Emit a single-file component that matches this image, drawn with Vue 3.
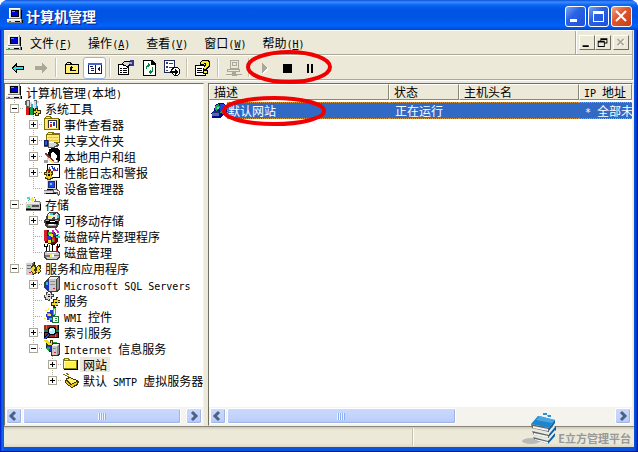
<template>
  <div class="window">
    <header class="titlebar">
      <Icon name="computer" />
      <h1>计算机管理</h1>
      <button class="caption" aria-label="最小化"><svg viewBox="0 0 21 21"><path d="M5 13h7v3H5z" fill="#fff" /></svg></button>
      <button class="caption" aria-label="最大化"><svg viewBox="0 0 21 21"><path d="M5 5h11v11H5zM6 8v7h9V8z" fill="#fff" fill-rule="evenodd" /></svg></button>
      <button class="caption close" aria-label="关闭"><svg viewBox="0 0 21 21"><path d="M5 5l10 10M15 5L5 15" stroke="#fff" stroke-width="2" /></svg></button>
    </header>

    <div class="client">
      <div class="bars">
        <div class="menubar">
          <Icon name="computer" />
          <nav>
            <button v-for="m in menus" :key="m.key">{{ m.text }}<span class="ascii">(<u>{{ m.key }}</u>)</span></button>
          </nav>
          <div class="mdi">
            <button aria-label="最小化"><svg viewBox="0 0 16 14"><path d="M3 10h7v2H3z" /></svg></button>
            <button aria-label="还原"><svg viewBox="0 0 16 14"><path d="M5 2h8v6h-3v4H2V5h3zM6 4v1h4v2h2V4zM3 7v4h6V7z" fill-rule="evenodd" /></svg></button>
            <button class="mdi-close" aria-label="关闭" disabled><svg viewBox="0 0 16 14"><path d="M5 4l7 7M12 4l-7 7" stroke="#fff" stroke-width="2" /><path d="M4 3l7 7M11 3l-7 7" stroke="#aca899" stroke-width="2" /></svg></button>
          </div>
        </div>
        <div class="toolbar">
          <template v-for="(t, i) in tools" :key="i">
            <i v-if="t.sep" class="sep"></i>
            <button v-else :class="{ pressed: t.pressed }" :disabled="t.disabled" :aria-label="t.title"><Icon :name="t.icon" /></button>
          </template>
          <svg class="mark mark-tools" viewBox="0 0 86 34"><ellipse cx="43" cy="17" rx="41" ry="15" /></svg>
        </div>
      </div>

      <main class="panes">
        <section class="pane tree-pane">
          <ul class="tree" role="tree">
            <li v-for="row in rows" :key="row.label" role="treeitem">
              <i v-for="(g, i) in row.guides" :key="i" class="cell" :class="{ line: g }"></i>
              <span v-if="row.depth" class="cell branch" :class="{ last: row.last }">
                <button v-if="row.state" class="expander" :class="row.state" :aria-label="row.label" @click="toggle(row)"></button>
              </span>
              <Icon :name="row.icon" />
              <Label :text="row.label" class="label" :class="{ selected: row.label === '网站' }" />
            </li>
          </ul>
          <div class="scrollbar">
            <button aria-label="向左"><svg viewBox="0 0 16 16"><path d="M9 4L5 8l4 4" /></svg></button>
            <div class="track"><div class="thumb" style="width: 97%"><i></i></div></div>
            <button aria-label="向右"><svg viewBox="0 0 16 16"><path d="M6 4l4 4-4 4" /></svg></button>
          </div>
        </section>

        <section class="pane list-pane">
          <table>
            <colgroup><col class="c1"><col class="c2"><col class="c3"><col></colgroup>
            <thead>
              <tr><th v-for="c in columns" :key="c"><Label :text="c" /></th></tr>
            </thead>
            <tbody>
              <tr>
                <td class="first">
                  <div class="name">
                    <Icon name="site" />
                    <span>默认网站</span>
                    <svg class="mark mark-site" viewBox="0 0 104 31"><ellipse cx="52" cy="15" rx="50" ry="13" /></svg>
                  </div>
                </td>
                <td>正在运行</td>
                <td></td>
                <td><Label text="* 全部未" /></td>
              </tr>
            </tbody>
          </table>
          <div class="scrollbar">
            <button aria-label="向左"><svg viewBox="0 0 16 16"><path d="M9 4L5 8l4 4" /></svg></button>
            <div class="track"><div class="thumb" style="width: 59%"><i></i></div></div>
            <button aria-label="向右"><svg viewBox="0 0 16 16"><path d="M6 4l4 4-4 4" /></svg></button>
          </div>
        </section>
      </main>

      <footer class="statusbar">
        <span class="status-main"></span>
        <span class="status-side"></span>
      </footer>
    </div>

    <div class="brand">
      <svg viewBox="0 0 36 34">
        <ellipse cx="9" cy="29" rx="9" ry="3" fill="#b9b9b6" />
        <path d="M9 12l7-8 17 4-6 8z" fill="#1d86cf" />
        <path d="M14 8l4-4 15 4-3 3z" fill="#49a6e2" />
        <path d="M9 12l18 4v4l-17-4zM10 19l17 4v3l-15-3zM11 25l15 4v3l-13-4z" fill="#5e6468" />
        <path d="M11 14l15 3v2l-15-3zM12 21l14 3v2l-14-3zM13 27l13 3v2l-13-4z" fill="#f2f5f7" />
        <path d="M27 16l6-8v3l-6 8zM27 22l7-8v4l-7 7zM26 29l7-8v3l-7 8z" fill="#0d5f9f" />
        <path d="M27 19l6-7v2l-6 8zM27 25l6-7v2l-6 8z" fill="#dcebf5" />
        <path d="M21 1h4v2h-4zM25 3h4v2h-3z" fill="#2c8fd0" />
      </svg>
      <span>E立方管理平台</span>
    </div>
  </div>
</template>

<script setup>
import { computed, h, ref } from 'vue';

// every icon is a stack of [fill, path] layers on a 16x16 grid
const icons = {
  computer: [
    ['#000', 'M3 10h11V2h1v9h-1v1H3zM1 15h15v-3h-1v3z'],
    ['#808080', 'M2 0h12v11H2zM0 11h15v4H0z'],
    ['#e4e4e4', 'M2 0h11v10H2zM0 11h14v3H0z'],
    ['#fff', 'M2 0h11v1H3v9H2zM0 11h14v1H0z'],
    ['#000', 'M4 2h8v7H4zM8 13h5v1H8z'],
    ['#0000d8', 'M5 3h6v5H5z'],
    ['#5a8cff', 'M5 3h3v1H5z'],
    ['#00a000', 'M2 13h2v1H2z'],
  ],
  tools: [
    ['#606060', 'M1 0h4v2h2v2H5v4H1V5H0V1zM9 0h3v6h1v4H9z'],
    ['#d8d8d8', 'M2 1h2v5H2zM5 2h2v4H5zM9 1h2v8H9zM12 1h2v2h-2z'],
    ['#30a8d8', 'M6 4h2v3H6zM11 4h1v4h-1z'],
    ['#000', 'M4 8h1v7H1v-1h3zM8 8h1v7H5v-1h3z'],
    ['#e01818', 'M1 7h3v8H1z'],
    ['#08a048', 'M5 7h3v8H5z'],
    ['#302800', 'M9 10h1V8h3v2h3v4h-2v2h-4v-2H8v-2z'],
    ['#f0d020', 'M9 11h2V9h1v2h3v2h-2v2h-2v-2H9z'],
    ['#000', 'M11 12h1v1h-1z'],
  ],
  events: [
    ['#000', 'M1 14h15V3h-1v10H1z'],
    ['#807000', 'M0 2l2-2h5l1 2h7v12H0z'],
    ['#ffe878', 'M1 3h13v10H1zM2 1h4v1H2z'],
    ['#303030', 'M3 4h10v8H3z'],
    ['#fff', 'M5 5h7v7H5z'],
    ['#ffe030', 'M3 4h1v8H3z'],
    ['#e02020', 'M6 8h2v3H6z'],
    ['#2030d0', 'M9 6h2v4H9zM6 6h2v1H6z'],
  ],
  shared: [
    ['#807000', 'M3 1l2-1h4l1 1h6v10H2V3z'],
    ['#ffe878', 'M3 3h12v7H3zM4 1h4v1H4z'],
    ['#e5c838', 'M4 5h10v1H4zM4 8h10v1H4z'],
    ['#505050', 'M0 8h5v2h5l5 2v2l-5 2H4v-1H0z'],
    ['#101870', 'M0 8h4v6H0z'],
    ['#2858d8', 'M1 9h2v4H1z'],
    ['#d8d8d8', 'M5 10h4l4 2v1l-4 2H5z'],
    ['#fff', 'M5 10h3l3 1H5z'],
  ],
  users: [
    ['#000', 'M5 1l3-1h5l3 3v9l-2 2-2-1 1-5-2-3H7v3l2 3-3 1-2-4z'],
    ['#fff', 'M8 4l3 1 1 4-2 3-3-1V7z'],
    ['#a0a0a0', 'M8 12h6l1 3H8zM0 12h4v3H0z'],
    ['#fff', 'M10 12h3v2h-3z'],
    ['#f4cd9a', 'M3 7h2v3l2 2H3z'],
    ['#902028', 'M0 6l2-1 8 8-2 1z'],
    ['#e83848', 'M1 6l7 7H7L0 6z'],
    ['#fff060', 'M4 11l2-1 4 5H7z'],
  ],
  perf: [
    ['#000', 'M3 0h13v14H3z'],
    ['#fff', 'M4 1h11v12H4z'],
    ['#d02020', 'M4 5h1V3h1v2h1v2h2V5h1V3h1v2h1v2H9v2H7V7H6V6H5v2H4z'],
    ['#2030d0', 'M7 2h2v2h2v2h2V4h1v3h-3V5H8V3H7z'],
    ['#403000', 'M0 8h2V6h2v2h1V6h2v2h2v3H8v2h1v2H7v1H3v-1H1v-2h1v-2H0z'],
    ['#e8c820', 'M1 9h2V7h1v2h2V7h1v2h1v1H7v2h1v2H6v1H4v-1H2v-2h1v-2H1z'],
    ['#000', 'M4 10h2v2H4z'],
  ],
  device: [
    ['#808080', 'M3 0h10v10H3zM0 10h14v4H0z'],
    ['#d8d8d8', 'M3 0h9v9H3zM0 11h12v2H0z'],
    ['#000', 'M12 1h1v9H3V9h9zM2 13h10v1H2z'],
    ['#202880', 'M4 1h7v7H4z'],
    ['#2048f0', 'M5 2h5v5H5z'],
    ['#60d8ff', 'M6 3h2v2H6z'],
    ['#606060', 'M9 9h5l2 3v3l-2 1-1-3H9z'],
    ['#f0f0f0', 'M10 10h3v1h2v3h-1v-2h-4z'],
  ],
  storage: [
    ['#707070', 'M1 6h4V1h5l1 4h4l1 2v8H1z'],
    ['#c0c0c0', 'M1 6h13l1 1v7H1z'],
    ['#ececec', 'M2 6h12v2H2zM0 7h2v2H0z'],
    ['#f8f8f8', 'M2 1l3-1h3l2 3v2L7 6H3L1 4z'],
    ['#40d8d8', 'M2 1h3v2H2z'],
    ['#ffe838', 'M5 3l3-2 1 3-2 2z'],
    ['#50c050', 'M5 3L4 6 2 4z'],
    ['#505050', 'M7 9h7v2H7zM1 12h5v1H1z'],
    ['#000', 'M1 14h15V8h-1v5H1z'],
    ['#20c030', 'M3 10h2v1H3z'],
  ],
  removable: [
    ['#404040', 'M3 2l3-2h7l3 3v4l-2 8-2 1H3l-2-2-1-6 2-2z'],
    ['#e8e8e8', 'M4 2l2-1h3l1 3-2 3H4zM10 3l2-2 3 2-1 3-3 1z'],
    ['#40d0d8', 'M6 1h3v2H6zM13 3h2v3h-2z'],
    ['#f8e838', 'M4 4h3v2H4z'],
    ['#000', 'M2 8h12v4H2z'],
    ['#b0b0b0', 'M2 8h3v1H2zM11 8h3v1h-3zM4 12h8v2H4z'],
    ['#fff', 'M6 9h5v1H6zM5 12h5v1H5z'],
  ],
  defrag: [
    ['#600810', 'M1 2h4v2h6v3h3v6l-3 3H4v-1H1z'],
    ['#d82028', 'M0 2h3v11H0zM8 9h3v5H8z'],
    ['#20b838', 'M4 4h4v3H4zM8 11h2v3H8z'],
    ['#f8e020', 'M5 6h4v3H5zM4 12h3v3H4z'],
    ['#2838d8', 'M3 8h4v4H3zM9 5h3v3H9z'],
    ['#d020c8', 'M11 0h1v1h1v1h1v1h1v2h-2V3h-1V2h-1zM8 2h2v3H8z'],
    ['#20d0b0', 'M12 8h4v2h-4zM13 6h2v1h-2z'],
  ],
  diskmgmt: [
    ['#000', 'M0 0h1v2h2V0h1v3H3v4H2V3H0zM7 0h4v1H9v6H8V1H7zM13 0h1v2h1V0h1v3l-2 1v3h-1z'],
    ['#404040', 'M1 7h13l2 2v5l-3 2H3l-3-2V9z'],
    ['#c8c8c8', 'M1 8h12l2 1v4l-3 2H4l-3-2z'],
    ['#3038b0', 'M5 1h1v6H5z'],
    ['#c02828', 'M12 2h1v5h-1z'],
    ['#707070', 'M1 11h5v2H1zM10 11h5v1h-5z'],
    ['#ffe850', 'M6 10h2v3H6z'],
    ['#fff', 'M3 8h9v1H3zM8 10h2v3H8z'],
  ],
  services: [
    ['#000', 'M2 15h6l2-2V2H9v11H2z'],
    ['#d0d0d0', 'M1 3h6v12H1z'],
    ['#f4f4f4', 'M3 1h5L7 3H1z'],
    ['#707070', 'M7 3l2-2v13l-2 1zM2 5h4v1H2zM2 8h4v1H2z'],
    ['#e02020', 'M4 12h2v1H4z'],
    ['#403800', 'M6 6l3-2 2 2v2l2-3h3v3l-1 1 1 2-2 3-3-1-1 1-3-1-1-3z'],
    ['#f0d828', 'M7 7l2-1 1 2-1 2 1 2-1 1-2-1-1-2zM12 7l2-1 1 2-1 1 1 2-1 1-2 1-1-1 1-2z'],
  ],
  server: [
    ['#404040', 'M4 2l2-2h9l1 1v12l-3 3H5l-3-2-2-3V6l3-2z'],
    ['#1830d0', 'M2 5h3v9H3l-2-3V6z'],
    ['#38b8e8', 'M2 6h2v3H2z'],
    ['#c8c8c8', 'M5 3h7v12H5z'],
    ['#f0f0f0', 'M6 1h8l-2 2H5z'],
    ['#909090', 'M13 3l2-2v11l-2 2zM6 5h5v1H6zM6 8h5v1H6z'],
    ['#e02020', 'M9 12h2v1H9z'],
  ],
  gears: [
    ['#404040', 'M0 3h2V0h2v2h2V0h2v2h2v3H8v2H6v2H4V8H1V6H0z'],
    ['#d8d8d8', 'M1 3h2V1h1v2h2V1h1v2h2v1H7v3H5v1H4V7H2V5H1z'],
    ['#000', 'M4 4h2v1H4z'],
    ['#302800', 'M7 10h2V7h3V5h2v3h2v3h-2v3h-2v2h-3v-2H7z'],
    ['#f0d828', 'M8 11h2V8h3V6h1v3h2v1h-2v3h-2v2h-1v-2H8z'],
    ['#000', 'M11 10h2v1h-2z'],
  ],
  wmi: [
    ['#2038d0', 'M3 4h3V2h3v3h2v6H8v3H6v-2H3V9H2V6h1z'],
    ['#30b8d8', 'M3 5h3v3H3zM5 10h3v2H5z'],
    ['#f8e830', 'M1 2h2v1H1zM4 6h3v2H4zM0 10h2v1H0zM3 13h2v1H3zM4 0h1v2H4z'],
    ['#28c840', 'M9 0h3v7H9z'],
    ['#e8f8f0', 'M10 1h1v5h-1z'],
    ['#206838', 'M8 8h7v7H8z'],
    ['#fff', 'M9 9h5v5H9z'],
    ['#28a840', 'M11 10h2v1h-2zM11 12h2v1h-2z'],
  ],
  index: [
    ['#000', 'M0 1h15v13H0z'],
    ['#a02820', 'M0 1h14v5H0zM1 9h13v4H1z'],
    ['#d86040', 'M2 1h1v4H2zM12 1h1v4h-1zM11 9h1v4h-1z'],
    ['#207868', 'M0 6h4v2H0zM12 6h3v2h-3z'],
    ['#000', 'M5 3h5l2 2v5l-2 1H6l-4 4H0v-2l4-4V4z'],
    ['#a8f4f8', 'M6 4h3l2 2v3L9 10H6L5 9V5z'],
    ['#fff', 'M6 5h2v2H6z'],
    ['#2848d8', 'M4 10l1 1-4 4H0v-1z'],
  ],
  iis: [
    ['#081858', 'M2 3h7v9H5L2 9z'],
    ['#1838c0', 'M3 5h5v6H5L3 9z'],
    ['#28a840', 'M3 7h3v2H5v2L2 9zM9 2h4v2H9z'],
    ['#403800', 'M0 1l3-1 3 3V0h3v6H2V4h2z'],
    ['#f0e020', 'M0 0h3l4 3V1h1v4H4V4L1 2z'],
    ['#303030', 'M7 5l2-2h6l1 1v10l-2 2H7z'],
    ['#c8c8c8', 'M8 6h5v9H8z'],
    ['#f0f0f0', 'M9 4h6l-2 2H8z'],
    ['#909090', 'M13 6l2-2v9l-2 2zM9 8h3v1H9z'],
    ['#e02020', 'M10 12h2v1h-2z'],
  ],
  folder: [
    ['#000', 'M1 14h14V4h-1v9H1z'],
    ['#807810', 'M0 4l1-2h5l1 2h7v9H0z'],
    ['#fff04c', 'M1 5h12v7H1zM2 3h3v1H2z'],
    ['#fffbb0', 'M1 5h12v1H1zM1 6h1v6H1z'],
  ],
  smtp: [
    ['#403800', 'M3 6l4-1 9 4-1 4-6 3-7-5z'],
    ['#fff070', 'M4 7l3-1 7 3-6 3z'],
    ['#f0c818', 'M3 9l5 4 6-3v2l-5 3-6-4z'],
    ['#807010', 'M0 2h2v1h2v1h2v1H4V4H2V3H0zM3 1h2v1h1v1H4V2H3z'],
  ],
  site: [
    ['#000890', 'M5 1l3-1h5l3 4v6l-4 2-2 3H1v-3l-1-2 3-3z'],
    ['#1848d8', 'M9 1h4l2 3v5l-3 2-3-2z'],
    ['#18a848', 'M4 3l4-2 1 3-3 4-2-1zM11 7l3 1-2 3-3-1z'],
    ['#60d8f0', 'M6 4h2v2H6z'],
    ['#5868a8', 'M1 10h7v3H1z'],
    ['#202878', 'M2 8h6v2H2z'],
  ],
  back: [
    ['#000', 'M1 8l6-5v3h7v4H7v3z'],
    ['#20e8f0', 'M3 8l3-3v2h7v2H6v3z'],
  ],
  forward: [['#aca899', 'M14 8L9 3v3H2v4h7v3z']],
  up: [
    ['#000', 'M1 4l2-2h4l1 2h7v10H1z'],
    ['#fff068', 'M2 5h12v8H2zM3 3h3v1H3z'],
    ['#000', 'M5 8l2-2 2 2H8v2h4v1H6V8z'],
  ],
  panel: [
    ['#101858', 'M1 3h14v11H1z'],
    ['#fff', 'M2 5h6v8H2zM9 5h5v8H9z'],
    ['#4868c8', 'M1 3h14v2H1z'],
    ['#101858', 'M3 6h3v1H3zM4 8h3v1H4zM4 10h3v1H4zM13 6v6l-3-3z'],
  ],
  props: [
    ['#000', 'M0 4h11v11H0z'],
    ['#fff', 'M1 5h9v9H1z'],
    ['#000', 'M2 8h2v1H2zM5 8h4v1H5zM2 10h2v1H2zM5 10h4v1H5zM2 12h2v1H2zM5 12h4v1H5zM4 3l3-2h6v5h-2l-2 2-1-2H5z'],
    ['#d8d8d8', 'M5 3l2-1h4v3H6zM8 5h2v1H8z'],
    ['#303890', 'M12 0h4v6h-4z'],
    ['#a8a8a8', 'M11 2h3v2h-3z'],
  ],
  refresh: [
    ['#000', 'M2 0h9l4 4v12H2z'],
    ['#fff', 'M3 1h7v4h4v10H3z'],
    ['#088838', 'M5 9V6l2-2V3l3 2-3 2V6L6 7v2zM12 7v4l-2 2v1l-3-2 3-2v1l1-1V7z'],
  ],
  export: [
    ['#202858', 'M0 0h11v13H0z'],
    ['#fff', 'M1 1h9v11H1z'],
    ['#303878', 'M2 2h2v2H2zM5 3h4v1H5zM2 6h2v2H2zM5 7h4v1H5zM2 10h2v1H2z'],
    ['#000', 'M9 7h4l3 3v3l-3 3h-3l-3-3v-3z'],
    ['#fff', 'M9 9l1-1h3l2 2v3l-2 2h-3l-2-2v-3z'],
    ['#000', 'M6 11h5V9l3 3-3 3v-2H6z'],
  ],
  help: [
    ['#000', 'M0 5h11v11H0z'],
    ['#fff', 'M1 6h9v9H1z'],
    ['#000', 'M2 8h5v1H2zM2 10h5v1H2zM2 12h7v1H2zM5 2l3-2h5l2 2v4l-3 3v1h1v4H8v-4l1-4 1-1V4L8 5H5z'],
    ['#f8e820', 'M6 2l2-1h4l2 2v2l-3 3v1H9V7l2-2V3H9L8 4H6zM9 11h3v2H9z'],
  ],
  network: [
    ['#aca899', 'M4 0h9v9H4zM1 9h13v3h-4v2h6v1h-5l-1 1H6l-1-1H0v-1h6v-2H1z'],
    ['#ece9d8', 'M5 1h7v7H5zM2 10h11v1H2z'],
    ['#aca899', 'M6 2h5v4H6z'],
    ['#ece9d8', 'M7 3h3v2H7z'],
  ],
  play: [
    ['#fff', 'M6 4l6 5-6 5z'],
    ['#aca899', 'M5 3l6 5-6 5z'],
  ],
  stop: [['#000', 'M3 4h9v9H3z']],
  pause: [['#000', 'M4 4h2v9H4zM8 4h2v9H8z']],
};

const Icon = (props) =>
  h('svg', { class: 'icon', viewBox: '0 0 16 16', 'aria-hidden': 'true' },
    icons[props.name].map(([fill, d]) => h('path', { fill, d })));
Icon.props = ['name'];

// latin runs take half the width of a han character
const Label = (props) =>
  h('span', props.text.split(/([\x20-\x7e]+)/).filter(Boolean)
    .map((part) => (/^[\x20-\x7e]/.test(part) ? h('span', { class: 'ascii' }, part) : part)));
Label.props = ['text'];

const menus = [
  { text: '文件', key: 'F' },
  { text: '操作', key: 'A' },
  { text: '查看', key: 'V' },
  { text: '窗口', key: 'W' },
  { text: '帮助', key: 'H' },
];

const tools = [
  { icon: 'back', title: '后退' },
  { icon: 'forward', title: '前进', disabled: true },
  { sep: true },
  { icon: 'up', title: '上一级' },
  { icon: 'panel', title: '显示树', pressed: true },
  { sep: true },
  { icon: 'props', title: '属性' },
  { icon: 'refresh', title: '刷新' },
  { icon: 'export', title: '导出列表' },
  { sep: true },
  { icon: 'help', title: '帮助' },
  { sep: true },
  { icon: 'network', title: '连接', disabled: true },
  { sep: true },
  { icon: 'play', title: '启动', disabled: true },
  { icon: 'stop', title: '停止' },
  { icon: 'pause', title: '暂停' },
];

const columns = ['描述', '状态', '主机头名', 'IP 地址'];

const tree = ref([
  {
    label: '系统工具', icon: 'tools', state: 'minus', children: [
      { label: '事件查看器', icon: 'events', state: 'plus' },
      { label: '共享文件夹', icon: 'shared', state: 'plus' },
      { label: '本地用户和组', icon: 'users', state: 'plus' },
      { label: '性能日志和警报', icon: 'perf', state: 'plus' },
      { label: '设备管理器', icon: 'device' },
    ],
  },
  {
    label: '存储', icon: 'storage', state: 'minus', children: [
      { label: '可移动存储', icon: 'removable', state: 'plus' },
      { label: '磁盘碎片整理程序', icon: 'defrag' },
      { label: '磁盘管理', icon: 'diskmgmt' },
    ],
  },
  {
    label: '服务和应用程序', icon: 'services', state: 'minus', children: [
      { label: 'Microsoft SQL Servers', icon: 'server', state: 'plus' },
      { label: '服务', icon: 'gears' },
      { label: 'WMI 控件', icon: 'wmi' },
      { label: '索引服务', icon: 'index', state: 'plus' },
      {
        label: 'Internet 信息服务', icon: 'iis', state: 'minus', children: [
          { label: '网站', icon: 'folder', state: 'plus' },
          { label: '默认 SMTP 虚拟服务器', icon: 'smtp', state: 'plus' },
        ],
      },
    ],
  },
]);

function flatten(nodes, guides) {
  return nodes.flatMap((node, i) => {
    const last = i === nodes.length - 1;
    const row = { ...node, node, last, guides, depth: guides.length + 1 };
    const open = node.state === 'minus' && node.children;
    return open ? [row, ...flatten(node.children, [...guides, !last])] : [row];
  });
}

const rows = computed(() => [
  { label: '计算机管理(本地)', icon: 'computer', depth: 0, guides: [] },
  ...flatten(tree.value, []),
]);

function toggle(row) {
  row.node.state = row.node.state === 'minus' ? 'plus' : 'minus';
}
</script>

<style>
body {
  margin: 0;
  background: #fff;
}

.ascii {
  font-family: "DejaVu Sans Mono", monospace;
  font-size: 10px;
  line-height: 10px;
  white-space: pre;
}

.icon {
  flex: none;
  display: block;
  width: 16px;
  height: 16px;
  shape-rendering: crispEdges;
}
</style>

<style scoped>
.window {
  position: relative;
  box-sizing: border-box;
  min-height: 100vh;
  display: flex;
  flex-direction: column;
  padding: 0 4px 4px;
  border-radius: 8px 8px 0 0;
  background: linear-gradient(90deg, #0019cf 0, #0831d9 1px, #166aee 2px, #0855dd 4px, #0855dd calc(100% - 4px), #0441d8 calc(100% - 2px), #00138c);
  border-bottom: 1px solid #00138c;
  font: 12px/16px "Noto Sans CJK SC", sans-serif;
  color: #000;
  overflow: hidden;
}

button {
  padding: 0;
  border: 0;
  background: none;
  font: inherit;
  color: inherit;
}

button svg {
  display: block;
}

.titlebar {
  display: flex;
  align-items: center;
  gap: 2px;
  height: 30px;
  margin: 0 -4px;
  padding: 2px 6px 0 7px;
  box-sizing: border-box;
  background: linear-gradient(#0a50d8 0, #3c8cff 2px, #0a66f4 5px, #0055e5 9px, #0054e3 18px, #0062fc 26px, #0047cf 30px);
}

.titlebar h1 {
  flex: 1;
  margin: 0;
  padding-left: 1px;
  color: #fff;
  font-size: 14px;
  line-height: 20px;
  text-shadow: 1px 1px #0a1883;
}

.caption {
  box-sizing: border-box;
  width: 21px;
  height: 21px;
  border: 1px solid #fff;
  border-radius: 3px;
  background: linear-gradient(135deg, #7ba4f4, #2a62e4 40%, #1f50dc);
}

.caption svg {
  width: 21px;
  height: 21px;
  margin: -1px;
}

.caption.close {
  background: linear-gradient(135deg, #f0a58c, #e05830 40%, #c83c14);
}

.client {
  flex: 1;
  display: flex;
  flex-direction: column;
  background: #ece9d8;
}

.bars {
  margin-right: 1px;
  border-top: 1px solid #fff;
  border-right: 1px solid #aca899;
  border-bottom: 1px solid #aca899;
}

.menubar {
  display: flex;
  align-items: center;
  height: 23px;
  padding-left: 2px;
  border-bottom: 1px solid #aca899;
}

.menubar nav {
  flex: 1;
  display: flex;
}

.menubar nav button {
  padding: 0 8px;
}

.mdi {
  display: flex;
  align-items: center;
  align-self: stretch;
  padding: 0 3px;
  border-left: 1px solid #aca899;
  box-shadow: inset 1px 0 #fff;
}

.mdi button {
  width: 16px;
  height: 15px;
  box-sizing: border-box;
  background: #ece9d8;
  border: 1px solid;
  border-color: #fff #716f64 #716f64 #fff;
}

.mdi svg {
  width: 14px;
  height: 13px;
}

.mdi .mdi-close {
  margin-left: 2px;
}

.toolbar {
  position: relative;
  display: flex;
  align-items: center;
  height: 23px;
  padding-left: 2px;
  border-top: 1px solid #fff;
}

.toolbar button {
  box-sizing: border-box;
  width: 23px;
  height: 22px;
  display: grid;
  place-items: center;
}

.toolbar .pressed {
  border: 1px solid #98b5e2;
  border-radius: 3px;
  background: #fff;
}

.sep {
  width: 1px;
  height: 19px;
  margin: 0 3px;
  background: #c5c2b0;
  border-right: 1px solid #fff;
}

.mark {
  position: absolute;
  z-index: 2;
  fill: none;
  stroke: #f00000;
  stroke-width: 4;
  pointer-events: none;
}

.mark-tools {
  left: 242px;
  top: -6px;
  width: 86px;
  height: 34px;
}

.mark-site {
  left: 11px;
  top: -6px;
  width: 104px;
  height: 31px;
}

.panes {
  flex: 1;
  display: grid;
  grid-template-columns: 200px minmax(0, 1fr);
  gap: 4px;
  padding: 2px 1px 0 0;
  border-top: 1px solid #fff;
  border-bottom: 1px solid #8a8778;
}

.pane {
  min-width: 0;
  display: flex;
  flex-direction: column;
  justify-content: space-between;
  border: 1px solid;
  border-color: #716f64 #f4f2e8 #f4f2e8 #716f64;
  background: #fff;
  overflow: hidden;
}

.tree {
  margin: 0;
  padding: 0;
  list-style: none;
  line-height: 15px;
}

.tree li {
  display: flex;
  align-items: center;
  height: 16px;
  white-space: nowrap;
}

.tree .icon {
  margin: 0 1px;
}

.cell {
  flex: none;
  width: 19px;
  height: 16px;
  background-repeat: no-repeat;
}

.cell.line {
  background-image: repeating-linear-gradient(#aca899 0 1px, transparent 1px 2px);
  background-position: 9px 0;
  background-size: 1px 16px;
}

.cell.branch {
  display: flex;
  align-items: center;
  background-image:
    repeating-linear-gradient(#aca899 0 1px, transparent 1px 2px),
    repeating-linear-gradient(90deg, #aca899 0 1px, transparent 1px 2px);
  background-position: 9px 0, 9px 8px;
  background-size: 1px 16px, 10px 1px;
}

.cell.branch.last {
  background-size: 1px 8px, 10px 1px;
}

.expander {
  box-sizing: border-box;
  width: 9px;
  height: 9px;
  margin: 1px 0 0 5px;
  border: 1px solid #aca899;
  background: linear-gradient(#000, #000) 1px 3px / 5px 1px no-repeat, #fff;
}

.expander.plus {
  background: linear-gradient(#000, #000) 1px 3px / 5px 1px no-repeat, linear-gradient(#000, #000) 3px 1px / 1px 5px no-repeat, #fff;
}

.label {
  padding: 0 3px;
}

.label.selected {
  background: #ece9d8;
}

table {
  width: 100%;
  border-collapse: separate;
  border-spacing: 0;
  table-layout: fixed;
}

.c1 {
  width: 180px;
}

.c2 {
  width: 70px;
}

.c3 {
  width: 120px;
}

th {
  height: 14px;
  padding: 0 0 0 4px;
  font-weight: normal;
  line-height: 14px;
  text-align: left;
  background: #ece9d8;
  border: 1px solid;
  border-color: #fff #8a8778 #8a8778 #fff;
  white-space: nowrap;
  overflow: hidden;
}

tbody::before {
  content: "";
  display: block;
  height: 2px;
}

td {
  height: 15px;
  padding: 0 0 0 6px;
  line-height: 15px;
  color: #fff;
  background: #316ac5;
  border: 1px dotted #d8983a;
  border-width: 1px 0;
  white-space: nowrap;
  overflow: hidden;
}

td.first {
  padding: 0 0 0 2px;
  border: 0;
  background: #fff;
  overflow: visible;
}

.name {
  position: relative;
  display: flex;
  align-items: center;
}

.name span {
  flex: 1;
  background: #316ac5;
  border: 1px dotted #d8983a;
  border-width: 1px 0 1px 1px;
}

.scrollbar {
  display: flex;
  height: 16px;
  padding: 1px;
  background: #f4f3ee;
}

.scrollbar button,
.thumb {
  box-sizing: border-box;
  flex: none;
  height: 16px;
  border: 1px solid #fff;
  border-radius: 2px;
  background: linear-gradient(#cad8fd, #c0d1fb 70%, #b4c8f6);
  box-shadow: inset -1px -1px #9fb5e8;
}

.scrollbar button {
  width: 16px;
}

.scrollbar button svg {
  width: 16px;
  height: 16px;
  margin: -1px;
  fill: none;
  stroke: #4d6185;
  stroke-width: 3;
}

.track {
  flex: 1;
  padding-left: 1px;
}

.thumb {
  display: grid;
  place-items: center;
}

.thumb i {
  width: 8px;
  height: 7px;
  background: repeating-linear-gradient(90deg, #eef4fe 0 1px, #8cb0f8 1px 2px);
}

.statusbar {
  display: flex;
  height: 20px;
  padding: 1px 0;
  box-sizing: border-box;
  background: linear-gradient(#c9c6b6, #ece9d8 3px, #ece9d8 16px, #dcd9c8);
}

.status-main {
  flex: 1;
  border-right: 1px solid #c5c2b0;
}

.status-side {
  width: 35%;
  border-left: 1px solid #fff;
}

/* watermark lying over the lower right corner */
.brand {
  position: absolute;
  right: 7px;
  bottom: 5px;
  display: flex;
  align-items: flex-end;
  color: #96989a;
  font-size: 11px;
  font-weight: bold;
  line-height: 16px;
}

.brand svg {
  width: 36px;
  height: 34px;
}
</style>
